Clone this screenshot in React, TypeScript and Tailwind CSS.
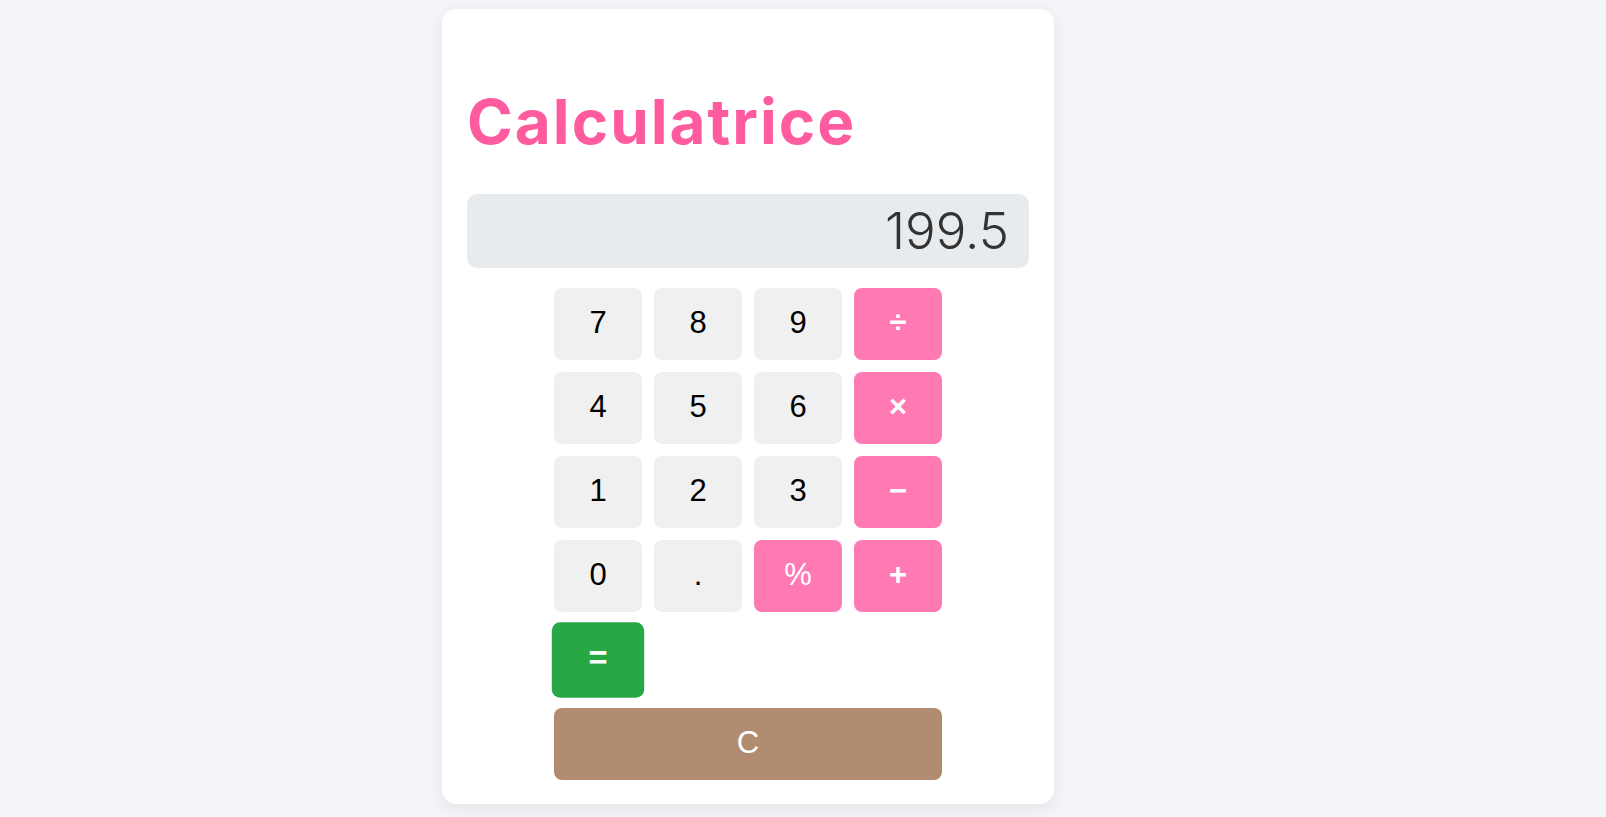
const keys = [
  { label: "7", kind: "num" },
  { label: "8", kind: "num" },
  { label: "9", kind: "num" },
  { label: "÷", kind: "op" },
  { label: "4", kind: "num" },
  { label: "5", kind: "num" },
  { label: "6", kind: "num" },
  { label: "×", kind: "op" },
  { label: "1", kind: "num" },
  { label: "2", kind: "num" },
  { label: "3", kind: "num" },
  { label: "−", kind: "op" },
  { label: "0", kind: "num" },
  { label: ".", kind: "num" },
  { label: "%", kind: "pct" },
  { label: "+", kind: "op" },
];

const Calculator = () => {
  return (
    <div className="min-h-[817px] bg-[#f4f5f9] pl-[442px] pt-[9px]">
      {/** Card **/}
      <div className="w-[612px] h-[795px] bg-white rounded-[14px] shadow-[0_4px_16px_rgba(0,0,0,0.08)] px-[25px] pt-6">
        <h1 className="mt-[58px] mb-[41px] font-['Inter',sans-serif] font-bold text-[62px] leading-none tracking-[2px] text-[#ff5ca0]">
          Calculatrice
        </h1>

        {/** Display **/}
        <div className="h-[74px] bg-[#e8ebee] rounded-[10px] flex items-center justify-end pr-5 font-['Inter',sans-serif] font-light text-[51px] text-[#333]">
          199.5
        </div>

        {/** Keypad **/}
        <div className="mt-5 mx-auto w-[388px] grid grid-cols-4 gap-3 font-['Liberation_Sans',Arial,sans-serif] text-[31px]">
          {keys.map((k) => (
            <button
              key={k.label}
              className={
                k.kind === "op"
                  ? "h-[72px] pb-0.5 rounded-lg bg-[#ff79b2] text-white font-bold"
                  : k.kind === "pct"
                    ? "h-[72px] pb-0.5 rounded-lg bg-[#ff79b2] text-white"
                    : "h-[72px] pb-0.5 rounded-lg bg-[#f0f0f0] text-black"
              }
            >
              {k.label}
            </button>
          ))}
          <button className="h-[72px] pb-0.5 rounded-lg bg-[#28a745] text-white font-bold scale-105">
            =
          </button>
          <div className="col-span-3"></div>
          <button className="col-span-4 h-[72px] pb-0.5 rounded-lg bg-[#b18c70] text-white">
            C
          </button>
        </div>
      </div>
    </div>
  );
};

export default function App() {
  return <Calculator />;
}
